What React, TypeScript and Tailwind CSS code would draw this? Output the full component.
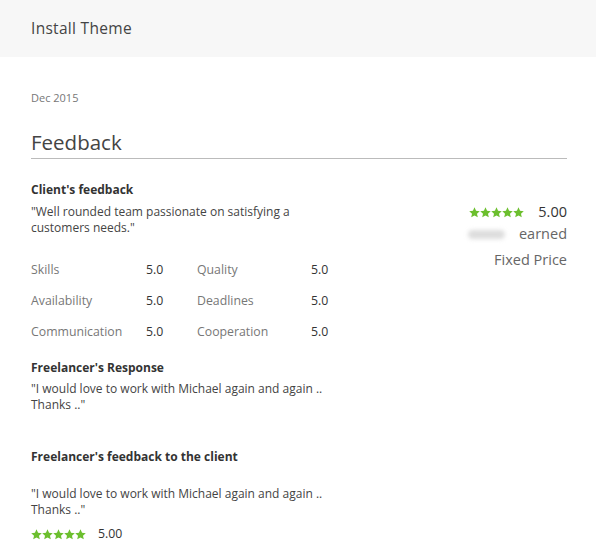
const font = { fontFamily: '"Open Sans", "Liberation Sans", sans-serif' };

function Stars({ size = 11 }: { size?: number }) {
  return (
    <div className="flex">
      {[0, 1, 2, 3, 4].map((i) => (
        <svg key={i} width={size} height={size} viewBox="0 0 24 24">
          <path
            fill="#6cbf2e"
            d="M12 0.8l3.4 7.4 8.1.8-6.1 5.5 1.8 8L12 18.4l-7.2 4.1 1.8-8L.5 9l8.1-.8z"
          />
        </svg>
      ))}
    </div>
  );
}

const metrics = [
  ["Skills", "5.0", "Quality", "5.0"],
  ["Availability", "5.0", "Deadlines", "5.0"],
  ["Communication", "5.0", "Cooperation", "5.0"],
];

export default function App() {
  return (
    <div className="w-[596px] h-[551px] bg-white overflow-hidden" style={font}>
      <div className="h-[57px] bg-[#f7f7f7] px-[31px] flex items-center">
        <h1 className="text-[15.5px] font-medium text-[#444] tracking-[0.3px]">Install Theme</h1>
      </div>

      <div className="pl-[31px] pr-[29px] pt-[33px]">
        <div className="text-[11px] text-[#777] leading-4">Dec 2015</div>

        <div className="mt-[23px] border-b border-[#bbb] pb-[3px]">
          <h2 className="text-[20.5px] text-[#444] leading-[26px]">Feedback</h2>
        </div>

        <div className="flex mt-[23px] h-[80px]">
          <div className="w-[272px]">
            <div className="text-[12px] font-bold text-[#333] leading-4">Client's feedback</div>
            <p className="text-[12px] text-[#444] leading-4 mt-[6px]">
              "Well rounded team passionate on satisfying a customers needs."
            </p>
          </div>
          <div className="flex-1 flex flex-col items-end pt-[20px] text-[14.5px] text-[#666]">
            <div className="flex items-center gap-[14px]">
              <Stars />
              <span className="text-[#333] font-medium leading-5">5.00</span>
            </div>
            <div className="flex items-center gap-[14px] mt-[2px] leading-5">
              <span className="w-[37px] h-[9px] rounded-full bg-[#ddd] blur-[2px]" />
              <span>earned</span>
            </div>
            <div className="mt-[6px] leading-5">Fixed Price</div>
          </div>
        </div>

        <div className="flex flex-col gap-[15px] text-[12.3px] leading-4">
          {metrics.map((row) => (
            <div key={row[0]} className="grid grid-cols-[115px_51px_114px_40px]">
              <span className="text-[#777]">{row[0]}</span>
              <span className="text-[#333] font-medium">{row[1]}</span>
              <span className="text-[#777]">{row[2]}</span>
              <span className="text-[#333] font-medium">{row[3]}</span>
            </div>
          ))}
        </div>

        <div className="mt-[20px] w-[300px]">
          <div className="text-[12px] font-bold text-[#333] leading-4">Freelancer's Response</div>
          <p className="text-[12px] text-[#444] leading-4 mt-[5px]">
            "I would love to work with Michael again and again .. Thanks .."
          </p>
        </div>

        <div className="mt-[36px] w-[300px]">
          <div className="text-[12px] font-bold text-[#333] leading-4">Freelancer's feedback to the client</div>
          <p className="text-[12px] text-[#444] leading-4 mt-[21px]">
            "I would love to work with Michael again and again .. Thanks .."
          </p>
          <div className="flex items-center gap-[12px] mt-[8px]">
            <Stars />
            <span className="text-[12.3px] text-[#333] font-medium leading-4">5.00</span>
          </div>
        </div>
      </div>
    </div>
  );
}
